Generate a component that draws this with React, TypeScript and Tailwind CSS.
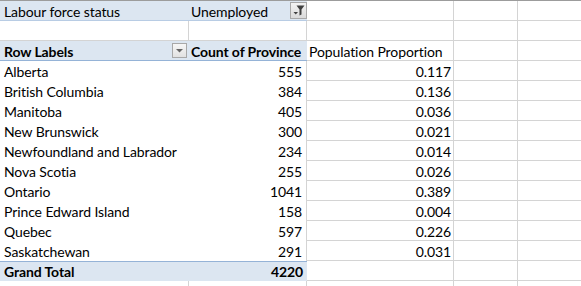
import React from "react";

const rows: [string, string, string][] = [
  ["Alberta", "555", "0.117"],
  ["British Columbia", "384", "0.136"],
  ["Manitoba", "405", "0.036"],
  ["New Brunswick", "300", "0.021"],
  ["Newfoundland and Labrador", "234", "0.014"],
  ["Nova Scotia", "255", "0.026"],
  ["Ontario", "1041", "0.389"],
  ["Prince Edward Island", "158", "0.004"],
  ["Quebec", "597", "0.226"],
  ["Saskatchewan", "291", "0.031"],
];

const FilterBtn = () => (
  <div className="w-[17px] h-[17px] border border-[#a8a8a8] bg-gradient-to-b from-[#f4f4f4] to-[#dadada] flex items-center justify-center">
    <svg width="15" height="15" viewBox="0 0 15 15">
      <path d="M5.5 2.5 H13.5 L10.5 6.5 V11.5 L8.5 12.5 V6.5 Z" fill="#404040" />
      <path d="M2.5 9 H7 L4.75 11.5 Z" fill="#404040" />
    </svg>
  </div>
);

const DropBtn = () => (
  <div className="w-[15px] h-[15px] border border-[#a8a8a8] bg-gradient-to-b from-[#f6f6f6] to-[#e2e2e2] flex items-center justify-center">
    <svg width="9" height="5" viewBox="0 0 9 5">
      <path d="M1 1 H8 L4.5 4.5 Z" fill="#666" />
    </svg>
  </div>
);

const G = "border-[#d4d4d4]";

const Tail = () => (
  <>
    <div className={`w-[147px] shrink-0 border-r border-b ${G}`} />
    <div className={`w-[64px] shrink-0 border-r border-b ${G}`} />
    <div className={`w-[64px] shrink-0 border-r border-b ${G}`} />
  </>
);

export default function App() {
  return (
    <div
      className="w-[581px] h-[286px] overflow-hidden bg-white text-black text-[14px] tracking-[-0.1px] leading-[19px]"
      style={{ fontFamily: "Lato, 'Open Sans', sans-serif" }}
    >
      <div className="h-px bg-[#9c9c9c]" />
      {/* Row 1 */}
      <div className="flex h-[20px]">
        <div className="w-[189px] shrink-0 bg-[#dce6f1] border-b border-[#b8cce4] pl-[4px] pt-[1px]">
          Labour force status
        </div>
        <div className="w-[118px] shrink-0 bg-[#dce6f1] border-b border-[#b8cce4] flex items-start">
          <span className="pl-[2px] pt-[1px] flex-1">Unemployed</span>
          <div className="pt-[1px]">
            <FilterBtn />
          </div>
        </div>
        <Tail />
      </div>
      {/* Row 2 */}
      <div className="flex h-[20px]">
        <div className={`w-[189px] shrink-0 border-r border-b ${G}`} />
        <div className={`w-[118px] shrink-0 border-r border-b ${G}`} />
        <Tail />
      </div>
      {/* Row 3 header */}
      <div className="flex h-[20px]">
        <div className="w-[189px] shrink-0 bg-[#dce6f1] border-b border-[#95b3d7] font-bold flex items-start">
          <span className="pl-[4px] pt-[1px] flex-1">Row Labels</span>
          <div className="pt-[2px] pr-[2px]">
            <DropBtn />
          </div>
        </div>
        <div className="w-[118px] shrink-0 bg-[#dce6f1] border-b border-[#95b3d7] font-bold pl-[2px] pt-[1px] whitespace-nowrap overflow-hidden">
          Count of Province
        </div>
        <div className={`w-[147px] shrink-0 border-r border-b ${G} pl-[2px] pt-[1px] whitespace-nowrap`}>
          Population Proportion
        </div>
        <div className={`w-[64px] shrink-0 border-r border-b ${G}`} />
        <div className={`w-[64px] shrink-0 border-r border-b ${G}`} />
      </div>
      {rows.map(([name, count, prop]) => (
        <div key={name} className="flex h-[20px]">
          <div className="w-[189px] shrink-0 pl-[4px] pt-[1px]">{name}</div>
          <div className={`w-[118px] shrink-0 border-r ${G} text-right pr-[4px] pt-[1px]`}>{count}</div>
          <div className={`w-[147px] shrink-0 border-r border-b ${G} text-right pr-[2px] pt-[1px]`}>{prop}</div>
          <div className={`w-[64px] shrink-0 border-r border-b ${G}`} />
          <div className={`w-[64px] shrink-0 border-r border-b ${G}`} />
        </div>
      ))}
      {/* Grand total */}
      <div className="flex h-[20px]">
        <div className="w-[189px] shrink-0 bg-[#dce6f1] border-t border-[#95b3d7] font-bold pl-[4px]">
          Grand Total
        </div>
        <div className="w-[118px] shrink-0 bg-[#dce6f1] border-t border-[#95b3d7] font-bold text-right pr-[4px]">
          4220
        </div>
        <div className={`w-[147px] shrink-0 border-r border-b ${G}`} />
        <div className={`w-[64px] shrink-0 border-r border-b ${G}`} />
        <div className={`w-[64px] shrink-0 border-r border-b ${G}`} />
      </div>
      {/* Row 15 */}
      <div className="flex h-[20px] border-t border-[#d4d4d4] -mt-px">
        <div className={`w-[189px] shrink-0 border-r border-b ${G}`} />
        <div className={`w-[118px] shrink-0 border-r border-b ${G}`} />
        <Tail />
      </div>
    </div>
  );
}
